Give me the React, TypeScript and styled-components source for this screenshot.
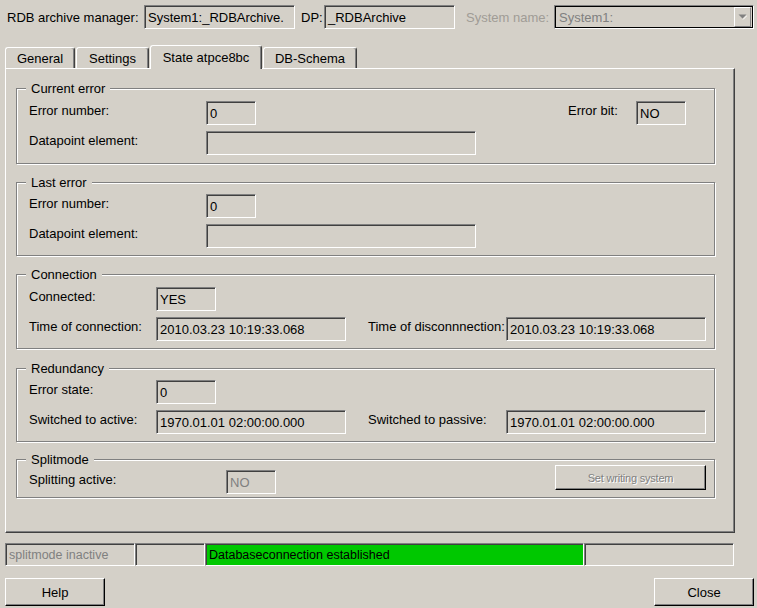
import React from 'react'
import styled, { createGlobalStyle } from 'styled-components'

const GlobalStyle = createGlobalStyle`
  html, body {
    margin: 0;
    padding: 0;
    background: #d4d0c8;
  }
  body {
    font-family: "Liberation Sans", Arial, sans-serif;
    font-size: 13px;
    color: #000;
  }
`

const Window = styled.div`
  width: 757px;
  height: 608px;
  box-sizing: border-box;
  padding: 5px 3px 0 5px;
  display: flex;
  flex-direction: column;
  overflow: hidden;
`

const TopBar = styled.div`
  display: flex;
  flex-flow: row nowrap;
  align-items: center;
  height: 24px;
`

const Label = styled.span<{ $w?: number; $ml?: number; $mt?: number; $dim?: boolean }>`
  flex: none;
  width: ${({ $w }) => ($w ? `${$w}px` : 'auto')};
  margin-left: ${({ $ml }) => $ml ?? 0}px;
  margin-top: ${({ $mt }) => $mt ?? 0}px;
  height: 24px;
  line-height: 20px;
  white-space: nowrap;
  color: ${({ $dim }) => ($dim ? '#a09c96' : '#000')};
`

const TopLabel = styled(Label)`
  line-height: 25px;
`

const Field = styled.div<{ $w: number; $mt?: number; $dim?: boolean }>`
  flex: none;
  box-sizing: border-box;
  width: ${({ $w }) => $w}px;
  height: 24px;
  margin-top: ${({ $mt }) => $mt ?? 0}px;
  display: flex;
  align-items: center;
  padding: 1px 0 0 3px;
  border: 1px solid;
  border-color: #808080 #fff #fff #808080;
  box-shadow: inset 1px 1px 0 #404040;
  white-space: nowrap;
  overflow: hidden;
  color: ${({ $dim }) => ($dim ? '#808080' : '#000')};
`

const Combo = styled.div<{ $w: number }>`
  flex: none;
  box-sizing: border-box;
  width: ${({ $w }) => $w}px;
  height: 24px;
  display: flex;
  align-items: center;
  padding: 0 1px 0 4px;
  border: 1px solid;
  border-color: #808080 #fff #fff #808080;
  box-shadow: inset 0 0 0 1px #000;
  color: #808080;
`

const ComboText = styled.span`
  flex: 1;
  white-space: nowrap;
`

const ComboArrow = styled.div`
  flex: none;
  box-sizing: border-box;
  width: 17px;
  height: 20px;
  margin-right: 1px;
  display: flex;
  align-items: center;
  justify-content: center;
  border: 1px solid;
  border-color: #fff #808080 #808080 #fff;
`

const TabBar = styled.div`
  display: flex;
  flex-flow: row nowrap;
  align-items: flex-end;
  gap: 1px;
  height: 23px;
  margin-top: 16px;
`

const Tab = styled.div<{ $w: number; $active?: boolean }>`
  position: relative;
  z-index: ${({ $active }) => ($active ? 1 : 0)};
  box-sizing: border-box;
  width: ${({ $w }) => $w}px;
  height: ${({ $active }) => ($active ? 24 : 21)}px;
  margin-bottom: ${({ $active }) => ($active ? -1 : 0)}px;
  display: flex;
  align-items: center;
  justify-content: center;
  padding-bottom: ${({ $active }) => ($active ? 1 : 0)}px;
  background: #d4d0c8;
  border-top: 1px solid #fff;
  border-left: 1px solid #fff;
  border-right: 1px solid #404040;
  border-radius: 3px 3px 0 0;
  box-shadow: inset -1px 0 0 #808080;
  white-space: nowrap;
`

const Panel = styled.div`
  box-sizing: border-box;
  width: 730px;
  height: 465px;
  padding: 19px 19px 0 10px;
  display: flex;
  flex-direction: column;
  border-top: 1px solid #fff;
  border-left: 1px solid #fff;
  border-right: 1px solid #404040;
  border-bottom: 1px solid #404040;
  box-shadow: inset -1px -1px 0 #808080;
`

const Group = styled.div<{ $mt?: number; $pb: number }>`
  display: flex;
  flex-direction: column;
  margin-top: ${({ $mt }) => $mt ?? 0}px;
  padding: 0 12px ${({ $pb }) => $pb}px;
  border: 1px solid #808080;
  box-shadow: inset 1px 1px 0 #fff, 1px 1px 0 #fff;
`

const GroupTitle = styled.span`
  align-self: flex-start;
  margin: -8px 0 0 -3px;
  padding: 0 5px;
  height: 15px;
  line-height: 15px;
  background: #d4d0c8;
  white-space: nowrap;
`

const Row = styled.div<{ $mt: number }>`
  display: flex;
  flex-flow: row nowrap;
  align-items: flex-start;
  margin-top: ${({ $mt }) => $mt}px;
`

const Button = styled.button<{ $w: number; $h: number; $ml?: number; $disabled?: boolean }>`
  flex: none;
  box-sizing: border-box;
  width: ${({ $w }) => $w}px;
  height: ${({ $h }) => $h}px;
  margin: 0 0 0 ${({ $ml }) => $ml ?? 0}px;
  padding: 0;
  background: #d4d0c8;
  border: 1px solid;
  border-color: #fff #000 #000 #fff;
  box-shadow: inset -1px -1px 0 #808080;
  font-family: "Liberation Sans", Arial, sans-serif;
  font-size: ${({ $disabled }) => ($disabled ? 11 : 13)}px;
  letter-spacing: ${({ $disabled }) => ($disabled ? '-0.2px' : '0')};
  color: ${({ $disabled }) => ($disabled ? '#808080' : '#000')};
  text-shadow: ${({ $disabled }) => ($disabled ? '1px 1px 0 #fff' : 'none')};
  cursor: default;
`

const StatusBar = styled.div`
  display: flex;
  flex-flow: row nowrap;
  height: 23px;
  margin-top: 10px;
`

const StatusCell = styled.div<{ $w: number; $bg?: string; $dim?: boolean }>`
  flex: none;
  box-sizing: border-box;
  width: ${({ $w }) => $w}px;
  height: 23px;
  display: flex;
  align-items: center;
  padding: 1px 0 0 3px;
  border: 1px solid;
  border-color: #808080 #fff #fff #808080;
  box-shadow: inset 1px 1px 0 #404040;
  background: ${({ $bg }) => $bg ?? 'transparent'};
  font-size: 12.5px;
  white-space: nowrap;
  overflow: hidden;
  color: ${({ $dim }) => ($dim ? '#808080' : '#000')};
`

const ButtonRow = styled.div`
  display: flex;
  flex-flow: row nowrap;
  justify-content: space-between;
  margin-top: 12px;
`

function DropArrow() {
  return (
    <svg width="9" height="6" viewBox="0 0 9 6">
      <polygon points="0.5,0.5 8.5,0.5 4.5,4.5" fill="#808080" />
      <line x1="5" y1="5.5" x2="9" y2="1.5" stroke="#fff" strokeWidth="1" />
    </svg>
  )
}

export default function App() {
  return (
    <>
      <GlobalStyle />
      <Window>
        <TopBar>
          <TopLabel $w={137} $ml={2}>RDB archive manager:</TopLabel>
          <Field $w={151}>System1:_RDBArchive.</Field>
          <TopLabel $w={23} $ml={6}>DP:</TopLabel>
          <Field $w={131}>_RDBArchive</Field>
          <TopLabel $w={88} $ml={11} $dim>System name:</TopLabel>
          <Combo $w={200}>
            <ComboText>System1:</ComboText>
            <ComboArrow>
              <DropArrow />
            </ComboArrow>
          </Combo>
        </TopBar>

        <TabBar>
          <Tab $w={70}>General</Tab>
          <Tab $w={73}>Settings</Tab>
          <Tab $w={112} $active>State atpce8bc</Tab>
          <Tab $w={94}>DB-Schema</Tab>
        </TabBar>

        <Panel>
          <Group $pb={8}>
            <GroupTitle>Current error</GroupTitle>
            <Row $mt={5}>
              <Label $w={177}>Error number:</Label>
              <Field $w={50}>0</Field>
              <Label $w={68} $ml={312}>Error bit:</Label>
              <Field $w={50}>NO</Field>
            </Row>
            <Row $mt={6}>
              <Label $w={177}>Datapoint element:</Label>
              <Field $w={270} />
            </Row>
          </Group>

          <Group $mt={18} $pb={7}>
            <GroupTitle>Last error</GroupTitle>
            <Row $mt={4}>
              <Label $w={177}>Error number:</Label>
              <Field $w={50}>0</Field>
            </Row>
            <Row $mt={6}>
              <Label $w={177}>Datapoint element:</Label>
              <Field $w={270} />
            </Row>
          </Group>

          <Group $mt={18} $pb={7}>
            <GroupTitle>Connection</GroupTitle>
            <Row $mt={5}>
              <Label $w={127}>Connected:</Label>
              <Field $w={60}>YES</Field>
            </Row>
            <Row $mt={6}>
              <Label $w={127}>Time of connection:</Label>
              <Field $w={190}>2010.03.23 10:19:33.068</Field>
              <Label $w={138} $ml={22}>Time of disconnnection:</Label>
              <Field $w={200}>2010.03.23 10:19:33.068</Field>
            </Row>
          </Group>

          <Group $mt={19} $pb={7}>
            <GroupTitle>Redundancy</GroupTitle>
            <Row $mt={4}>
              <Label $w={127}>Error state:</Label>
              <Field $w={60}>0</Field>
            </Row>
            <Row $mt={6}>
              <Label $w={127}>Switched to active:</Label>
              <Field $w={190}>1970.01.01 02:00:00.000</Field>
              <Label $w={138} $ml={22}>Switched to passive:</Label>
              <Field $w={200}>1970.01.01 02:00:00.000</Field>
            </Row>
          </Group>

          <Group $mt={17} $pb={3}>
            <GroupTitle>Splitmode</GroupTitle>
            <Row $mt={-2}>
              <Label $w={197} $mt={5}>Splitting active:</Label>
              <Field $w={50} $mt={5} $dim>NO</Field>
              <Button $w={151} $h={25} $ml={279} $disabled>Set writing system</Button>
            </Row>
          </Group>
        </Panel>

        <StatusBar>
          <StatusCell $w={130} $dim>splitmode inactive</StatusCell>
          <StatusCell $w={70} />
          <StatusCell $w={379} $bg="#00c800">Databaseconnection established</StatusCell>
          <StatusCell $w={150} />
        </StatusBar>

        <ButtonRow>
          <Button $w={100} $h={28}>Help</Button>
          <Button $w={100} $h={28}>Close</Button>
        </ButtonRow>
      </Window>
    </>
  )
}
